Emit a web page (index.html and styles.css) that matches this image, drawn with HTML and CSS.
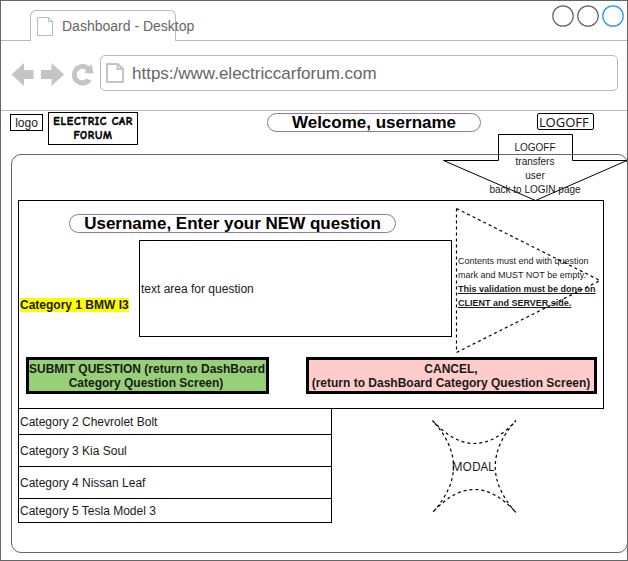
FILE: index.html
```html
<!DOCTYPE html>
<html lang="en">
<head>
<meta charset="utf-8">
<title>Dashboard - Desktop</title>
<link rel="stylesheet" href="styles.css">
</head>
<body>
<div class="window">
  <div class="tabs">
    <div class="tab">
      <svg class="tab-icon" width="17" height="20" viewBox="0 0 17 20"><path d="M.5.5h11l4 4v14H.5zM11.500.5v4h4"/></svg>
      <span>Dashboard - Desktop</span>
    </div>
    <svg class="controls" width="72" height="22" viewBox="0 0 72 22"><circle cx="11" cy="11" r="10.200"/><circle cx="36" cy="11" r="10.200"/><circle class="active" cx="61" cy="11" r="10.200"/></svg>
  </div>
  <div class="toolbar">
    <svg class="nav" width="84" height="26" viewBox="0 0 84 26">
      <path d="M.5 13.500 13 2v7h9.500v9H13v7z"/>
      <path d="M53 13.500 40.500 2v7H30v9h10.500v7z"/>
      <path d="M80.500 3 82.500 12.500l-9.500-.5 2.300-2.600A5.700 5.700 0 1 0 75.500 17.500l5 2.200A10.700 10.700 0 1 1 78.300 5.500z"/>
    </svg>
    <div class="address">
      <svg class="url-icon" width="18" height="20" viewBox="0 0 18 20"><path d="M1 1h11l5 5v13H1zM11.500 1v5H17"/></svg>
      <span>https:/www.electriccarforum.com</span>
    </div>
  </div>
  <div class="header">
    <div class="logo">logo</div>
    <div class="brand">ELECTRIC CAR<br>FORUM</div>
    <div class="pill welcome">Welcome, username</div>
    <div class="logoff">LOGOFF</div>
  </div>
  <div class="page">
    <div class="panel">
      <div class="pill title">Username, Enter your NEW question</div>
      <div class="question">
        <div class="category"><mark>Category 1 BMW I3</mark></div>
        <div class="textarea">text area for question</div>
        <div class="note">Contents must end with question<br>mark and MUST NOT be empty.<br><b>This validation must be done on<br>CLIENT and SERVER side.</b></div>
      </div>
      <div class="actions">
        <div class="button submit">SUBMIT QUESTION (return to DashBoard<br>Category Question Screen)</div>
        <div class="button cancel">CANCEL,<br>(return to DashBoard Category Question Screen)</div>
      </div>
    </div>
    <div class="lower">
      <div class="list">
        <div class="row first">Category 2 Chevrolet Bolt</div>
        <div class="row">Category 3 Kia Soul</div>
        <div class="row">Category 4 Nissan Leaf</div>
        <div class="row last">Category 5 Tesla Model 3</div>
      </div>
      <div class="modal">MODAL</div>
    </div>
  </div>
  <div class="callout">LOGOFF<br>transfers<br>user<br>back to LOGIN page</div>
  <svg class="shapes" width="628" height="561" viewBox="0 0 628 561">
    <path d="M498.500 134.500h74v26h54.500L535.500 200.500 443.500 160.500h55z"/>
    <path class="dashed" d="M456.500 208.500 600 280.500 456.500 352.500z"/>
    <path class="dashed" d="M432.500 420.500Q474.500 466.500 516 420.500 474.500 466.500 516 512.500 474.500 466.500 432.500 512.500 474.500 466.500 432.500 420.500"/>
  </svg>
</div>
</body>
</html>
```
FILE: styles.css
```css
* { box-sizing: border-box; }
body { margin: 0; background: #fff; font: 12px/14px "Liberation Sans", Arial, sans-serif; color: #1a1a1a; }
svg { display: block; fill: none; flex: none; }
.window { position: relative; width: 628px; height: 561px; border: 1px solid #666; overflow: hidden; white-space: nowrap; }
.tabs { display: flex; justify-content: space-between; height: 40px; border-bottom: 1px solid #bbb; }
.tab { display: flex; width: 146px; height: 31px; margin: 9px 0 0 29px; padding-left: 6px; border: 1px solid #bbb; border-bottom: 0; border-radius: 6px 6px 0 0; background: #fff; font-size: 14px; line-height: 31px; color: #666; }
.tab-icon { margin: 6px 8px 0 0; stroke: #bbb; }
.controls { margin: 4px 3px 0 0; stroke: #666; stroke-width: 1.200; }
.controls .active { stroke: #1e90ff; }
.toolbar { display: flex; height: 70px; border-bottom: 1px solid #bbb; }
.nav { margin: 20px 5px 0 10px; fill: #c4c4c4; }
.address { display: flex; width: 518px; height: 36px; margin-top: 14px; padding-left: 5px; border: 1px solid #bbb; border-radius: 5px; font-size: 17px; line-height: 36px; color: #666; }
.url-icon { margin: 7px 8px 0 0; stroke: #c4c4c4; stroke-width: 2; }
.header { display: flex; align-items: flex-start; height: 43px; padding-left: 9px; }
.logo { width: 33px; height: 17px; margin-top: 3px; border: 1px solid #000; text-align: center; line-height: 16px; }
.brand { width: 90px; height: 33px; margin: 1px 0 0 5px; padding-top: 2px; border: 1px solid #000; text-align: center; font: bold 11px/14px "Comic Sans MS", "Comic Neue", "Open Sans", cursive; letter-spacing: .7px; -webkit-text-stroke: .5px #000; color: #000; }
.pill { height: 19px; border: 1px solid #9673a6; border-radius: 10px; text-align: center; font-size: 17px; font-weight: bold; line-height: 18px; color: #000; }
.welcome { width: 214px; margin: 2px 0 0 129px; }
.logoff { width: 57px; height: 17px; margin: 2px 0 0 56px; padding-left: 1px; border: 1px solid #000; border-radius: 2px; font: 13px/16px "Noto Sans", sans-serif; }
.page { width: 617px; height: 399px; margin-left: 10px; padding: 45px 0 0 6px; border: 1px solid #666; border-radius: 10px; }
.panel { width: 586px; height: 209px; padding-top: 13px; border: 1px solid #000; }
.title { width: 327px; margin-left: 50px; }
.question { display: flex; height: 97px; margin-top: 7px; }
.category { width: 120px; padding: 58px 0 0 1px; font-weight: bold; }
mark { background: #ff0; color: #1a1a00; }
.textarea { width: 313px; height: 97px; padding-left: 1px; border: 1px solid #000; line-height: 96px; }
.note { margin: 14px 0 0 6px; font-size: 9px; line-height: 14px; }
.note b { text-decoration: underline; }
.actions { display: flex; gap: 37px; margin: 20px 0 0 7px; }
.button { display: block; height: 37px; padding-top: 2px; border: 3px solid #000; text-align: center; font-weight: bold; }
.submit { width: 243px; padding-right: 3px; background: #97d077; }
.cancel { width: 291px; padding-right: 1px; background: #fcc; }
.lower { display: flex; }
.list { width: 314px; margin-top: -1px; border: 1px solid #000; }
.row { height: 32px; padding-left: 1px; border-bottom: 1px solid #000; line-height: 32px; }
.first { height: 26px; line-height: 26px; }
.last { height: 23px; border: 0; line-height: 24px; }
.modal { width: 84px; margin: 51px 0 0 99px; text-align: center; font: 12px/14px "Noto Sans", sans-serif; }
.callout { position: absolute; left: 484px; top: 140px; width: 100px; text-align: center; font: 9px/14px "Liberation Sans", Arial, sans-serif; font-size: 10px; }
.shapes { position: absolute; left: -1px; top: -1px; stroke: #000; }
.dashed { stroke-dasharray: 3 3; stroke-width: 1.200; }
```
